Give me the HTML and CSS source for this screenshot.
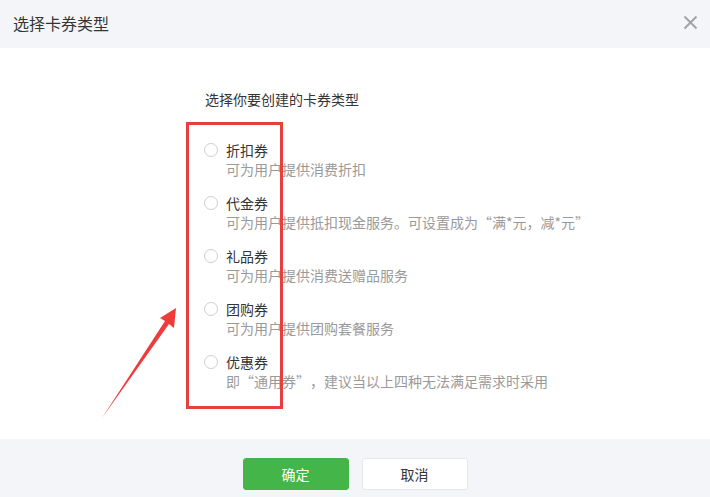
FILE: index.html
```html
<!DOCTYPE html>
<html lang="zh-CN">
<head>
<meta charset="utf-8">
<title>选择卡券类型</title>
<link rel="stylesheet" href="styles.css">
</head>
<body>
<div class="dialog">
  <div class="dialog-header">
    <span class="dialog-title">选择卡券类型</span>
    <span class="close-btn">
      <svg width="15" height="15" viewBox="0 0 15 15"><path d="M1.5 1.5 L13.5 13.5 M13.5 1.5 L1.5 13.5" stroke="#a3a3a3" stroke-width="2" fill="none"/></svg>
    </span>
  </div>
  <div class="dialog-body">
    <div class="content">
      <div class="heading">选择你要创建的卡券类型</div>
      <div class="options">
        <div class="option">
          <span class="radio"></span>
          <div class="option-text">
            <div class="option-label">折扣券</div>
            <div class="option-desc">可为用户提供消费折扣</div>
          </div>
        </div>
        <div class="option">
          <span class="radio"></span>
          <div class="option-text">
            <div class="option-label">代金券</div>
            <div class="option-desc">可为用户提供抵扣现金服务。可设置成为“满*元，减*元”</div>
          </div>
        </div>
        <div class="option">
          <span class="radio"></span>
          <div class="option-text">
            <div class="option-label">礼品券</div>
            <div class="option-desc">可为用户提供消费送赠品服务</div>
          </div>
        </div>
        <div class="option">
          <span class="radio"></span>
          <div class="option-text">
            <div class="option-label">团购券</div>
            <div class="option-desc">可为用户提供团购套餐服务</div>
          </div>
        </div>
        <div class="option">
          <span class="radio"></span>
          <div class="option-text">
            <div class="option-label">优惠券</div>
            <div class="option-desc">即<span class="q-open">“</span>通用券<span class="q-close">”</span>，建议当以上四种无法满足需求时采用</div>
          </div>
        </div>
      </div>
    </div>
  </div>
  <div class="dialog-footer">
    <button class="btn btn-primary">确定</button>
    <button class="btn btn-default">取消</button>
  </div>
  <svg class="annotation" width="710" height="497" viewBox="0 0 710 497">
    <rect x="187.5" y="123.5" width="94" height="284" fill="none" stroke="#e53f3e" stroke-width="3"/>
    <polygon points="102,418 165,321 160,318 176,308 174,328 169,324" fill="#f03b3b"/>
  </svg>
</div>
</body>
</html>
```
FILE: styles.css
```css
html, body {
  margin: 0;
  padding: 0;
  background: #ffffff;
}
body {
  font-family: "Noto Sans CJK SC", "Noto Sans", sans-serif;
  color: #353535;
}
.dialog {
  position: relative;
  width: 710px;
  height: 497px;
  display: flex;
  flex-direction: column;
  overflow: hidden;
}
.dialog-header {
  height: 48px;
  background: #f4f5f9;
  display: flex;
  align-items: center;
  justify-content: space-between;
  padding: 0 12px 0 13px;
  flex-shrink: 0;
}
.dialog-title {
  font-size: 16px;
  line-height: 22px;
  color: #353535;
  margin-top: -2px;
}
.close-btn {
  display: flex;
  width: 15px;
  height: 15px;
  margin-top: -3px;
}
.dialog-body {
  flex: 1;
  background: #ffffff;
}
.content {
  padding: 41px 0 0 204px;
}
.heading {
  font-size: 14px;
  line-height: 20px;
  color: #353535;
  padding-left: 1px;
}
.options {
  display: flex;
  flex-direction: column;
  gap: 15px;
  margin-top: 31px;
}
.option {
  display: flex;
  align-items: flex-start;
  gap: 8px;
}
.radio {
  width: 12px;
  height: 12px;
  border: 1px solid #cfcfcf;
  border-radius: 50%;
  margin-top: 3px;
  flex-shrink: 0;
  background: #fff;
}
.option-label {
  font-size: 14px;
  line-height: 20px;
  color: #353535;
}
.option-desc {
  font-size: 14px;
  line-height: 18px;
  color: #9a9a9a;
}
.q-open {
  display: inline-block;
  width: 1em;
  text-align: right;
}
.q-close {
  display: inline-block;
  width: 1em;
  text-align: left;
}
.dialog-footer {
  height: 58px;
  background: #f4f5f9;
  display: flex;
  justify-content: center;
  align-items: flex-start;
  gap: 13px;
  padding-top: 19px;
  box-sizing: border-box;
  flex-shrink: 0;
}
.btn {
  width: 106px;
  height: 32px;
  border-radius: 3px;
  font-family: "Noto Sans CJK SC", "Noto Sans", sans-serif;
  font-size: 14px;
  padding: 0;
  box-sizing: border-box;
  cursor: pointer;
}
.btn-primary {
  background: #44b549;
  border: 1px solid #44b549;
  color: #ffffff;
}
.btn-default {
  background: #ffffff;
  border: 1px solid #e4e8eb;
  color: #353535;
}
.annotation {
  position: absolute;
  left: 0;
  top: 0;
  pointer-events: none;
}
```
